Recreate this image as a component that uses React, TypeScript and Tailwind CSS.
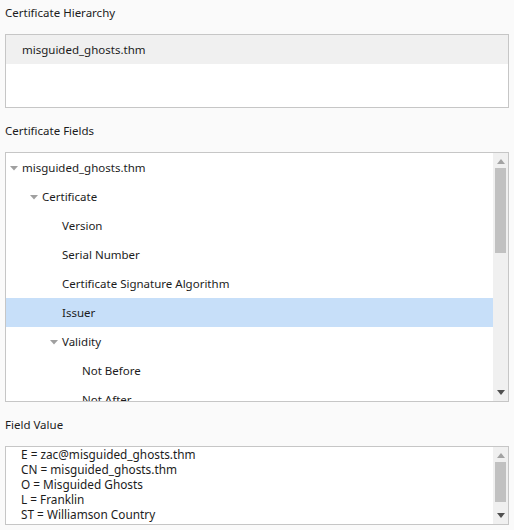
import React from "react";

const font = { fontFamily: '"Noto Sans", "Open Sans", sans-serif' };

const fields = [
  { label: "misguided_ghosts.thm", level: 0, open: true },
  { label: "Certificate", level: 1, open: true },
  { label: "Version", level: 2 },
  { label: "Serial Number", level: 2 },
  { label: "Certificate Signature Algorithm", level: 2 },
  { label: "Issuer", level: 2, selected: true },
  { label: "Validity", level: 2, open: true },
  { label: "Not Before", level: 3 },
  { label: "Not After", level: 3 },
];

const values = [
  "E = zac@misguided_ghosts.thm",
  "CN = misguided_ghosts.thm",
  "O = Misguided Ghosts",
  "L = Franklin",
  "ST = Williamson Country",
];

function Twisty() {
  return (
    <svg width="8" height="6" viewBox="0 0 8 6" className="shrink-0">
      <path d="M0 1h8L4 5.5z" fill="#a0a0a0" />
    </svg>
  );
}

function Scrollbar({ thumbTop, thumbHeight }: { thumbTop: number; thumbHeight: number }) {
  return (
    <div className="relative w-[15px] shrink-0 bg-[#f0f0f0]">
      <svg width="8" height="5" viewBox="0 0 8 5" className="absolute left-[4px] top-[6px]">
        <path d="M4 0L8 5H0z" fill="#a3a3a3" />
      </svg>
      <div
        className="absolute left-[2px] w-[11px] bg-[#c1c1c1]"
        style={{ top: thumbTop, height: thumbHeight }}
      />
      <svg width="8" height="5" viewBox="0 0 8 5" className="absolute left-[4px] bottom-[6px]">
        <path d="M0 0H8L4 5z" fill="#505050" />
      </svg>
    </div>
  );
}

export default function App() {
  return (
    <div className="h-[530px] w-[514px] overflow-hidden bg-[#fafafa] text-[11.5px] text-[#1c1c1c]" style={font}>
      <div className="flex h-[34px] items-center px-[5px] pb-[8px]">Certificate Hierarchy</div>
      <div className="mx-[5px] h-[74px] w-[504px] border border-[#c6c6c6] bg-white">
        <div className="flex h-[29px] items-center bg-[#f0f0f0] pl-[16px]">misguided_ghosts.thm</div>
      </div>

      <div className="flex h-[44px] items-center px-[5px] pt-[2px]">Certificate Fields</div>
      <div className="mx-[5px] flex h-[250px] w-[504px] border border-[#c6c6c6] bg-white">
        <div className="flex-1 overflow-hidden">
          {fields.map((f) => (
            <div
              key={f.label}
              className={`flex h-[29px] shrink-0 items-center ${f.selected ? "bg-[#c7dff9]" : ""}`}
              style={{ paddingLeft: f.level * 20 }}
            >
              <div className="flex w-[16px] shrink-0 items-center justify-center">{f.open && <Twisty />}</div>
              <span className="whitespace-nowrap">{f.label}</span>
            </div>
          ))}
        </div>
        <Scrollbar thumbTop={15} thumbHeight={85} />
      </div>

      <div className="flex h-[44px] items-center px-[5px] pt-[2px]">Field Value</div>
      <div className="mx-[5px] flex h-[79px] w-[504px] border border-[#c6c6c6] bg-white">
        <div className="flex-1 overflow-hidden pl-[15px] text-[11.8px]">
          {values.map((v) => (
            <div key={v} className="h-[15px] whitespace-nowrap leading-[15px]">
              {v}
            </div>
          ))}
        </div>
        <Scrollbar thumbTop={15} thumbHeight={40} />
      </div>
    </div>
  );
}
